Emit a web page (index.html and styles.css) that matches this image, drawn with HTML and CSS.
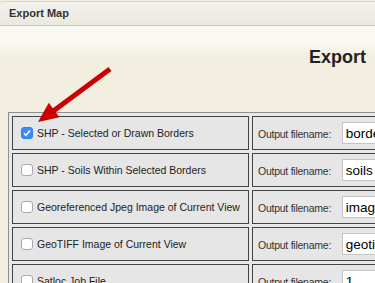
FILE: index.html
```html
<!DOCTYPE html>
<html lang="en">
<head>
    <meta charset="UTF-8">
    <meta name="viewport" content="width=device-width, initial-scale=1.0">
    <title>Export Map</title>
    <link rel="stylesheet" href="styles.css">
</head>
<body>

    <div class="title-bar">Export Map</div>

    <div class="content">
        <div class="page-header">
            <h1>Export</h1>
        </div>

        <table class="export-table">
            <tr>
                <td class="option">
                    <label><input type="checkbox" class="check" checked> SHP - Selected or Drawn Borders</label>
                </td>
                <td class="filename">
                    Output filename: <input type="text" class="name-input" value="borders">
                </td>
            </tr>
            <tr>
                <td class="option">
                    <label><input type="checkbox" class="check"> SHP - Soils Within Selected Borders</label>
                </td>
                <td class="filename">
                    Output filename: <input type="text" class="name-input" value="soils">
                </td>
            </tr>
            <tr>
                <td class="option">
                    <label><input type="checkbox" class="check"> Georeferenced Jpeg Image of Current View</label>
                </td>
                <td class="filename">
                    Output filename: <input type="text" class="name-input" value="image">
                </td>
            </tr>
            <tr>
                <td class="option">
                    <label><input type="checkbox" class="check"> GeoTIFF Image of Current View</label>
                </td>
                <td class="filename">
                    Output filename: <input type="text" class="name-input" value="geotiff">
                </td>
            </tr>
            <tr>
                <td class="option">
                    <label><input type="checkbox" class="check"> Satloc Job File</label>
                </td>
                <td class="filename">
                    Output filename: <input type="text" class="name-input" value="1">
                </td>
            </tr>
        </table>

        <!-- red pointer arrow drawn over the page -->
        <svg class="pointer" width="120" height="70" viewBox="0 0 120 70">
            <line x1="110" y1="8" x2="52" y2="51" stroke="#cc0000" stroke-width="5" />
            <polygon points="38,61 48.8,41.8 59.4,56.2" fill="#cc0000" />
        </svg>
    </div>

</body>
</html>
```

FILE: styles.css
```css
/* General Styles */
* {
    margin: 0;
    padding: 0;
    box-sizing: border-box;
}

body {
    font-family: "Liberation Sans", Arial, sans-serif;
    background-color: #f3efe0;
    color: #222;
    overflow: hidden;
    height: 283px;
}

.title-bar {
    margin-top: 1px;
    height: 25px;
    padding: 0 9px;
    line-height: 23px;
    font-size: 11px;
    font-weight: bold;
    color: #333;
    background: linear-gradient(#f3f1ec, #ebe8df);
    border-top: 1px solid #d9d4c4;
    border-bottom: 1px solid #cdc6b2;
    border-radius: 3px 0 0 0;
}

.content {
    position: relative;
    background: linear-gradient(#f9f8f2 0px, #f9f8f2 16px, #f3efe0 30px);
    min-height: 257px;
}

.page-header {
    padding: 20px 9px 0 0;
    height: 86px;
    text-align: right;
}

.page-header h1 {
    font-size: 18px;
    line-height: 22px;
    color: #222;
}

.export-table {
    margin-left: 8px;
    width: 500px;
    table-layout: fixed;
    border: 1px solid #8e8e8e;
    border-spacing: 3px;
    background-color: #e8e8e8;
    font-size: 10.5px;
}

.export-table td {
    height: 34px;
    border: 1px solid #444;
    background-color: #e6e6e6;
    vertical-align: middle;
    white-space: nowrap;
    overflow: hidden;
}

.option {
    width: 237px;
    padding: 0 0 1px 8px;
}

.option label {
    display: flex;
    align-items: center;
}

.check {
    appearance: none;
    -webkit-appearance: none;
    flex-shrink: 0;
    width: 12px;
    height: 12px;
    margin-right: 4px;
    border: 1px solid #a8a8a8;
    border-radius: 3px;
    background-color: #fff;
}

.check:checked {
    border-color: #2f7ef0;
    background: #3b8bf6 url("data:image/svg+xml;utf8,<svg xmlns='http://www.w3.org/2000/svg' viewBox='0 0 12 12'><path d='M3 6.2 L5 8.3 L9 3.5' fill='none' stroke='white' stroke-width='1.6'/></svg>") center / 12px 12px no-repeat;
}

.filename {
    padding-left: 5px;
    color: #333;
    letter-spacing: -0.25px;
}

.name-input {
    width: 120px;
    height: 22px;
    margin-left: 8px;
    padding: 0 3px;
    font-family: "Liberation Sans", Arial, sans-serif;
    font-size: 13.5px;
    letter-spacing: 0;
    color: #000;
    border: 1px solid #c4c4c4;
    background-color: #fff;
    vertical-align: baseline;
}

.pointer {
    position: absolute;
    left: 0;
    top: 35px;
}
```
